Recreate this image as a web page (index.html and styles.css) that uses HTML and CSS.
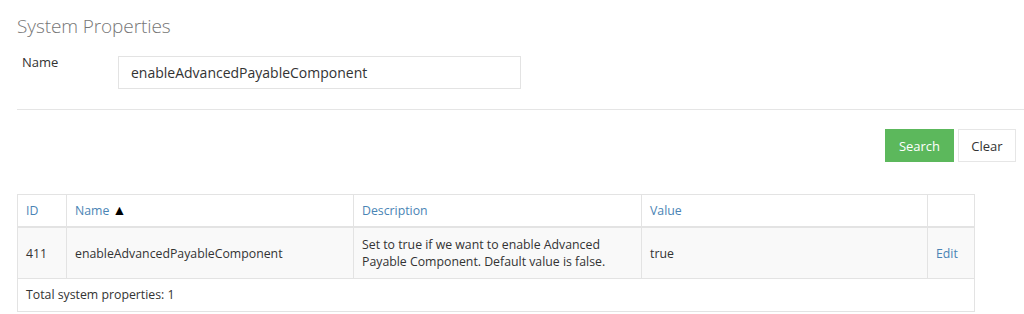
FILE: index.html
```html
<!DOCTYPE html>
<html>
<head>
<meta charset="utf-8">
<link rel="stylesheet" href="styles.css">
</head>
<body>
<div class="page">
  <h1 class="title">System Properties</h1>
  <div class="form-row">
    <label class="label" for="name">Name</label>
    <input class="input" id="name" type="text" value="enableAdvancedPayableComponent">
  </div>
  <hr class="divider">
  <div class="actions">
    <button class="btn btn-primary">Search</button>
    <button class="btn btn-default">Clear</button>
  </div>
  <table class="grid">
    <thead>
      <tr>
        <th class="col-id">ID</th>
        <th class="col-name">Name <span class="sort">&#9650;</span></th>
        <th class="col-desc">Description</th>
        <th class="col-value">Value</th>
        <th class="col-action"></th>
      </tr>
    </thead>
    <tbody>
      <tr class="row">
        <td>411</td>
        <td>enableAdvancedPayableComponent</td>
        <td>Set to true if we want to enable Advanced<br>Payable Component. Default value is false.</td>
        <td>true</td>
        <td><a class="link" href="#">Edit</a></td>
      </tr>
    </tbody>
    <tfoot>
      <tr>
        <td colspan="5">Total system properties: 1</td>
      </tr>
    </tfoot>
  </table>
</div>
</body>
</html>
```
FILE: styles.css
```css
html, body {
  margin: 0;
  padding: 0;
  background: #fff;
}
body {
  font-family: "Open Sans", "Liberation Sans", sans-serif;
  font-size: 12.3px;
  color: #333;
}
.page {
  padding-left: 17px;
}
.title {
  margin: 0;
  padding-top: 15px;
  font-size: 19px;
  font-weight: 300;
  line-height: 22px;
  color: #767676;
  letter-spacing: -0.1px;
}
.form-row {
  display: flex;
  align-items: flex-start;
  margin-top: 19px;
}
.label {
  width: 96px;
  padding-left: 5px;
  font-size: 13px;
  line-height: 14px;
  margin-top: -1px;
  color: #333;
}
.input {
  box-sizing: border-box;
  width: 403px;
  height: 33px;
  margin: 0;
  padding: 0 12px;
  border: 1px solid #e3e3e3;
  font-family: "Open Sans", "Liberation Sans", sans-serif;
  font-size: 14px;
  color: #333;
  outline: none;
}
.divider {
  margin: 20px 0 0 0;
  border: 0;
  border-top: 1px solid #e5e5e5;
}
.actions {
  display: flex;
  justify-content: flex-end;
  gap: 4px;
  padding-right: 8px;
  margin-top: 19px;
}
.btn {
  box-sizing: border-box;
  height: 33px;
  padding: 0 12px;
  font-family: "Open Sans", "Liberation Sans", sans-serif;
  font-size: 13px;
  border: 1px solid #e6e6e6;
  background: #fff;
  color: #333;
  cursor: pointer;
}
.btn-primary {
  width: 69px;
  background: #5cb85c;
  border-color: #5cb85c;
  color: #fff;
}
.btn-default {
  width: 58px;
}
.grid {
  margin-top: 32px;
  width: 957px;
  border-collapse: collapse;
  table-layout: fixed;
}
.grid th, .grid td {
  border: 1px solid #e3e3e3;
  padding: 8px 8px;
  text-align: left;
  font-weight: 400;
  line-height: 17px;
  vertical-align: middle;
}
.grid th {
  padding: 7px 8px;
  color: #4a84b5;
  border-bottom: 2px solid #e3e3e3;
}
.grid tfoot td {
  padding: 7px 8px 8px;
}
.col-id { width: 32px; }
.col-name { width: 270px; }
.col-desc { width: 271px; }
.col-value { width: 269px; }
.col-action { width: 30px; }
.sort {
  color: #000;
  font-size: 14px;
  line-height: 0;
}
.row td {
  background: #f9f9f9;
}
.link {
  color: #4a84b5;
  text-decoration: none;
}
```
